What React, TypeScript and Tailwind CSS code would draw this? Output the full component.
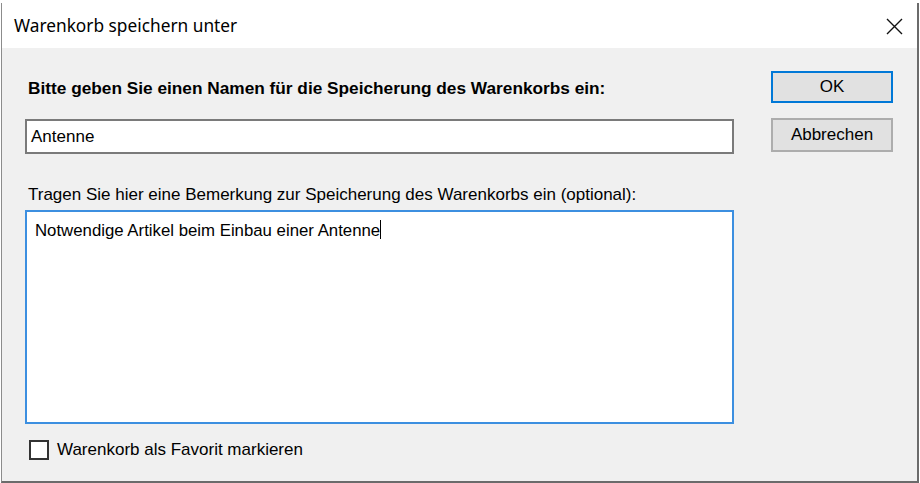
export default function App() {
  return (
    <div className="h-[483px] w-[920px] bg-white pl-px pt-[3px]">
      <div className="flex h-[480px] w-[918px] flex-col border-b-2 border-l border-r-2 border-b-[#6b6b6b] border-l-[#8c8c8c] border-r-[#6b6b6b]">
        {/* title bar */}
        <div className="flex h-[45px] items-center justify-between bg-white pl-[12px] pr-[14px]">
          <span className="text-[17.3px] text-black" style={{ fontFamily: '"Segoe UI", "Noto Sans", sans-serif' }}>
            Warenkorb speichern unter
          </span>
          <svg width="17" height="17" viewBox="0 0 17 17" className="mt-[1px]">
            <path d="M1 1 L16 16 M16 1 L1 16" stroke="#111" strokeWidth="1.4" />
          </svg>
        </div>

        {/* body */}
        <div className="flex flex-1 bg-[#f0f0f0] font-['Liberation_Sans',Arial,sans-serif] text-[17px] leading-[20px] text-black">
          <div className="flex w-[734px] flex-col pl-[23px]">
            <div className="mt-[30px] pl-[3px] text-[17.25px] font-bold">
              Bitte geben Sie einen Namen für die Speicherung des Warenkorbs ein:
            </div>
            <div className="mt-[21px] flex h-[35px] w-[709px] items-center border-2 border-[#7a7a7a] bg-white pl-[4px]">
              Antenne
            </div>
            <div className="mt-[31px] pl-[3px]">
              Tragen Sie hier eine Bemerkung zur Speicherung des Warenkorbs ein (optional):
            </div>
            <div className="mt-[5px] h-[214px] w-[709px] border-2 border-[#3c8fe0] bg-white pl-[8px] pt-[5px] text-[16.8px]">
              <span>Notwendige Artikel beim Einbau einer Antenne</span>
              <span className="inline-block h-[19px] w-px translate-y-[3px] bg-black" />
            </div>
            <label className="mt-[16px] flex items-center gap-[8px] pl-[4px]">
              <span className="h-[20px] w-[20px] border-2 border-[#333] bg-white" />
              <span>Warenkorb als Favorit markieren</span>
            </label>
          </div>
          <div className="ml-[35px] flex flex-col gap-[15px] pt-[23px]">
            <div className="flex h-[32px] w-[122px] items-center justify-center border-2 border-[#0078d7] bg-[#e1e1e1]">
              OK
            </div>
            <div className="flex h-[34px] w-[122px] items-center justify-center border-2 border-[#adadad] bg-[#e1e1e1]">
              Abbrechen
            </div>
          </div>
        </div>
      </div>
    </div>
  )
}
